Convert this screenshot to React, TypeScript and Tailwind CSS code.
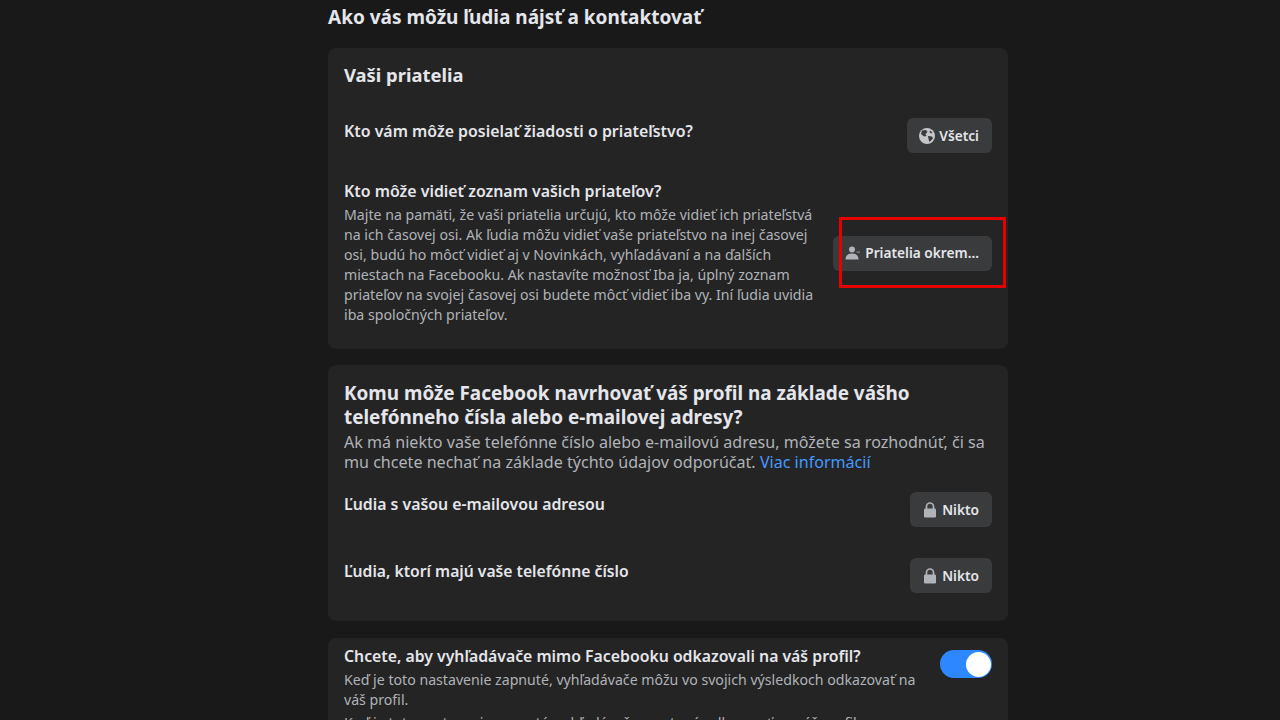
import React from "react";

const font = { fontFamily: '"Noto Sans", "Open Sans", sans-serif' };

function Globe() {
  return (
    <svg width="16" height="16" viewBox="0 0 16 16" className="shrink-0">
      <circle cx="8" cy="8" r="8" fill="#c4c6ca" />
      <path d="M3 2.5 L7 2 L8.5 4 L6.5 6 L7.5 8 L5 8.5 L2 6 Z" fill="#3a3b3c" />
      <path d="M9 8 L13 8.5 L14 10.5 L10.5 14 L9.5 11 Z" fill="#3a3b3c" />
      <path d="M11 2.5 L13.5 4.5 L12 5.5 L10.5 4 Z" fill="#3a3b3c" />
    </svg>
  );
}

function FriendsExcept() {
  return (
    <svg width="16" height="16" viewBox="0 0 16 16" className="shrink-0">
      <circle cx="7" cy="4.5" r="3" fill="#b0b3b8" />
      <path d="M0.5 14.5 C0.5 10.5 3 8.5 7 8.5 C11 8.5 13.5 10.5 13.5 14.5 Z" fill="#b0b3b8" />
      <rect x="11.5" y="6.5" width="3.5" height="1.2" fill="#8a8d91" />
    </svg>
  );
}

function Lock() {
  return (
    <svg width="16" height="16" viewBox="0 0 16 16" className="shrink-0">
      <path d="M4.5 7 V4.5 a3.5 3.5 0 0 1 7 0 V7" fill="none" stroke="#b0b3b8" strokeWidth="1.7" />
      <rect x="2" y="6.5" width="12" height="9" rx="1.2" fill="#b0b3b8" />
    </svg>
  );
}

function PillButton({ icon, label }: { icon: React.ReactNode; label: string }) {
  return (
    <div className="flex h-[35px] shrink-0 items-center gap-[4px] rounded-md bg-[#3a3b3c] pr-[13px] pl-3 text-[13.7px] leading-none font-semibold text-[#e4e6eb]">
      {icon}
      <span>{label}</span>
    </div>
  );
}

export default function App() {
  return (
    <div className="h-[720px] w-[1280px] overflow-hidden bg-[#191919]" style={font}>
      <div className="relative h-[720px]">
        <div className="ml-[328px] flex w-[680px] flex-col">
          <h1 className="flex h-[48px] items-start pt-[5px] text-[19px] leading-[24px] font-bold text-[#e4e6eb]">
            Ako vás môžu ľudia nájsť a kontaktovať
          </h1>

          <section className="flex h-[301px] flex-col rounded-lg bg-[#242424] px-4 pt-[15px]">
            <h2 className="text-[18.4px] leading-[24px] font-bold text-[#e4e6eb]">Vaši priatelia</h2>
            <div className="mt-[31px] flex items-start justify-between">
              <p className="mt-[3px] text-[15.9px] leading-[20px] font-semibold text-[#e4e6eb]">
                Kto vám môže posielať žiadosti o priateľstvo?
              </p>
              <PillButton icon={<Globe />} label="Všetci" />
            </div>
            <div className="mt-[28px] flex items-center justify-between">
              <div className="w-[478px]">
                <p className="text-[15.9px] leading-[20px] font-semibold text-[#e4e6eb]">
                  Kto môže vidieť zoznam vašich priateľov?
                </p>
                <p className="mt-[4px] text-[14.15px] leading-[20px] text-[#b0b3b8]">
                  Majte na pamäti, že vaši priatelia určujú, kto môže vidieť ich priateľstvá na ich časovej osi. Ak ľudia môžu vidieť vaše priateľstvo na inej časovej osi, budú ho môcť vidieť aj v Novinkách, vyhľadávaní a na ďalších miestach na Facebooku. Ak nastavíte možnosť Iba ja, úplný zoznam priateľov na svojej časovej osi budete môcť vidieť iba vy. Iní ľudia uvidia iba spoločných priateľov.
                </p>
              </div>
              <PillButton icon={<FriendsExcept />} label="Priatelia okrem..." />
            </div>
          </section>

          <section className="mt-4 flex h-[256px] flex-col rounded-lg bg-[#242424] px-4 pt-[16px]">
            <h2 className="text-[18.9px] leading-[24px] font-bold text-[#e4e6eb]">
              Komu môže Facebook navrhovať váš profil na základe vášho telefónneho čísla alebo e-mailovej adresy?
            </h2>
            <p className="mt-[3px] text-[16.08px] leading-[20px] text-[#b0b3b8]">
              Ak má niekto vaše telefónne číslo alebo e-mailovú adresu, môžete sa rozhodnúť, či sa mu chcete nechať na základe týchto údajov odporúčať.{" "}
              <span className="text-[#4599ff]">Viac informácií</span>
            </p>
            <div className="mt-[20px] flex items-start justify-between">
              <p className="text-[15.85px] leading-[24px] font-semibold text-[#e4e6eb]">Ľudia s vašou e-mailovou adresou</p>
              <PillButton icon={<Lock />} label="Nikto" />
            </div>
            <div className="mt-[31px] flex items-start justify-between">
              <p className="mt-[1px] text-[15.7px] leading-[24px] font-semibold text-[#e4e6eb]">Ľudia, ktorí majú vaše telefónne číslo</p>
              <PillButton icon={<Lock />} label="Nikto" />
            </div>
          </section>

          <section className="mt-[17px] flex h-[200px] items-start justify-between gap-5 rounded-lg bg-[#242424] px-4 pt-[8px]">
            <div>
              <p className="text-[15.8px] leading-[20px] font-semibold text-[#e4e6eb]">
                Chcete, aby vyhľadávače mimo Facebooku odkazovali na váš profil?
              </p>
              <p className="mt-[4px] text-[14.15px] leading-[20px] text-[#b0b3b8]">
                Keď je toto nastavenie zapnuté, vyhľadávače môžu vo svojich výsledkoch odkazovať na váš profil.
              </p>
              <p className="mt-[3px] text-[14.15px] leading-[20px] text-[#b0b3b8]">
                Keď je toto nastavenie vypnuté, vyhľadávače prestanú odkazovať na váš profil.
              </p>
            </div>
            <div className="mt-[4px] flex h-[28px] w-[52px] shrink-0 items-center justify-end rounded-full bg-[#2d88ff] px-[1px]">
              <div className="h-[25px] w-[25px] rounded-full bg-white" />
            </div>
          </section>
        </div>

        <div className="absolute top-[217px] left-[839px] h-[71px] w-[167px] border-[3px] border-[#e60000]" />
      </div>
    </div>
  );
}
